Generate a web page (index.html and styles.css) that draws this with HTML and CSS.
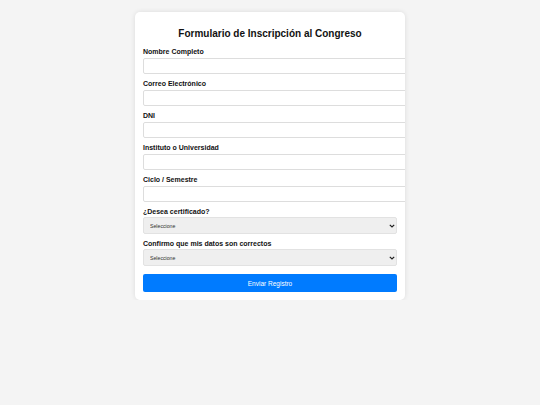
FILE: index.html
```html
<!DOCTYPE html>
<html lang="es">
<head>
<meta charset="utf-8">
<title>Formulario de Inscripción al Congreso</title>
<link rel="stylesheet" href="styles.css">
</head>
<body>
<div class="card">
  <h2 class="title">Formulario de Inscripción al Congreso</h2>
  <form class="form">
    <label class="label" for="nombre">Nombre Completo</label>
    <input class="input" type="text" id="nombre">
    <label class="label" for="correo">Correo Electrónico</label>
    <input class="input" type="email" id="correo">
    <label class="label" for="dni">DNI</label>
    <input class="input" type="text" id="dni">
    <label class="label" for="inst">Instituto o Universidad</label>
    <input class="input" type="text" id="inst">
    <label class="label" for="ciclo">Ciclo / Semestre</label>
    <input class="input" type="text" id="ciclo">
    <label class="label" for="cert">¿Desea certificado?</label>
    <div class="select-wrap">
      <select class="select" id="cert"><option>Seleccione</option><option>Sí</option><option>No</option></select>
      <svg class="chev" width="6" height="4" viewBox="0 0 6 4"><path d="M0.8 0.8 L3 3 L5.2 0.8" fill="none" stroke="#222" stroke-width="1.2"/></svg>
    </div>
    <label class="label" for="conf">Confirmo que mis datos son correctos</label>
    <div class="select-wrap">
      <select class="select" id="conf"><option>Seleccione</option><option>Sí</option></select>
      <svg class="chev" width="6" height="4" viewBox="0 0 6 4"><path d="M0.8 0.8 L3 3 L5.2 0.8" fill="none" stroke="#222" stroke-width="1.2"/></svg>
    </div>
    <button class="button" type="button">Enviar Registro</button>
  </form>
</div>
</body>
</html>
```
FILE: styles.css
```css
html, body {
  margin: 0;
  padding: 0;
}
body {
  background: #f4f4f4;
  font-family: "Liberation Sans", Arial, sans-serif;
  color: #222;
  padding-top: 12px;
}
.card {
  width: 254px;
  margin: 0 auto;
  padding: 8px;
  background: #fff;
  border-radius: 5px;
  box-shadow: 0 0 5px rgba(0, 0, 0, 0.1);
  overflow: hidden;
}
.title {
  margin: 8px 0 8px;
  font-size: 10px;
  line-height: 12px;
  font-weight: bold;
  text-align: center;
  color: #111;
}
.form {
  display: flex;
  flex-direction: column;
  align-items: flex-start;
}
.label {
  display: block;
  font-size: 7px;
  line-height: 8px;
  font-weight: bold;
  color: #111;
  margin-bottom: 2px;
}
.input {
  box-sizing: content-box;
  width: 100%;
  height: 14px;
  padding: 0 4px;
  margin: 0 0 6px;
  border: 1px solid #ddd;
  border-radius: 2px;
  background: #fff;
  font-size: 6px;
  font-family: inherit;
  outline: none;
}
.select-wrap {
  position: relative;
  width: 100%;
  margin: -1px 0 6px;
}
.select {
  display: block;
  box-sizing: border-box;
  width: 100%;
  height: 17px;
  margin: 0;
  padding: 0 6px;
  border: 1px solid #e2e2e2;
  border-radius: 2px;
  background-color: #efefef;
  font-size: 5.2px;
  font-family: inherit;
  color: #333;
  -webkit-appearance: none;
  appearance: none;
  outline: none;
}
.chev {
  position: absolute;
  right: 2px;
  top: 6.5px;
  pointer-events: none;
}
.button {
  box-sizing: border-box;
  width: 100%;
  height: 18px;
  margin-top: 2px;
  border: none;
  border-radius: 2px;
  background: #007bff;
  color: #fff;
  font-size: 6.5px;
  font-family: inherit;
}
```
